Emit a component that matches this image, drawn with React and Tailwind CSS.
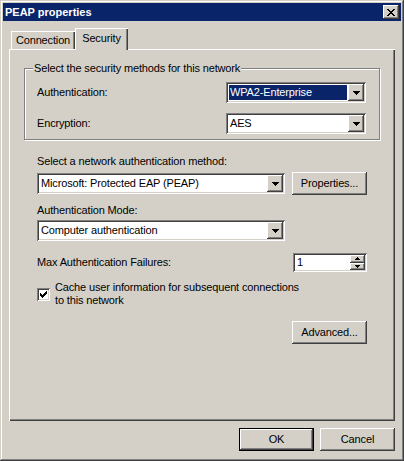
const raised =
  "shadow-[inset_-1px_-1px_#404040,inset_1px_1px_#ffffff,inset_-2px_-2px_#808080,inset_2px_2px_#d4d0c8]";
const sunken =
  "shadow-[inset_1px_1px_#808080,inset_-1px_-1px_#ffffff,inset_2px_2px_#404040,inset_-2px_-2px_#d4d0c8]";

// tiny bitmap glyph, one string per row, "#" = black pixel
const Pixels = ({ rows }) => (
  <svg
    width={rows[0].length}
    height={rows.length}
    shapeRendering="crispEdges"
    className="block"
  >
    {rows.map((row, y) =>
      row.split("").map((c, x) =>
        c === "#" ? <rect key={`${x}-${y}`} x={x} y={y} width="1" height="1" fill="#000" /> : null
      )
    )}
  </svg>
);

const arrowDown = ["#######", ".#####.", "..###..", "...#..."];
const tinyUp = ["..#..", ".###.", "#####"];
const tinyDown = ["#####", ".###.", "..#.."];
const closeX = ["##....##", ".##..##.", "..####..", "...##...", "..####..", ".##..##.", "##....##"];
const check = ["......#", ".....##", "#...###", "##.###.", "#####..", ".###...", "..#...."];

const Combo = ({ value, selected, className }) => (
  <div className={`flex h-[21px] items-stretch bg-white p-[2px] ${sunken} ${className}`}>
    <div className="flex flex-1 items-center pl-[1px] pr-[1px] py-[1px]">
      <span
        className={`flex h-full w-full items-center pl-[1px] ${
          selected ? "bg-[#0a246a] text-white" : "text-black"
        }`}
      >
        {value}
      </span>
    </div>
    <div className={`flex w-[16px] items-center justify-center bg-[#d4d0c8] ${raised}`}>
      <Pixels rows={arrowDown} />
    </div>
  </div>
);

const Button = ({ children, isDefault }) => (
  <button
    className={`flex h-[23px] w-[75px] items-center justify-center bg-[#d4d0c8] ${
      isDefault
        ? "shadow-[inset_0_0_0_1px_#000000,inset_-2px_-2px_#404040,inset_2px_2px_#ffffff,inset_-3px_-3px_#808080]"
        : raised
    }`}
  >
    {children}
  </button>
);

export default function App() {
  return (
    <div className="flex h-[461px] w-[404px] flex-col bg-[#d4d0c8] p-[3px] font-['Liberation_Sans',Arial,sans-serif] text-[11px] leading-[13px] tracking-[-0.15px] text-black shadow-[inset_-1px_-1px_#404040,inset_1px_1px_#d4d0c8,inset_-2px_-2px_#808080,inset_2px_2px_#ffffff]">
      {/* Title bar */}
      <div className="flex h-[18px] items-center justify-between bg-[#0a246a] pl-[2px] pr-[2px]">
        <span className="text-[11px] font-bold tracking-normal text-white">PEAP properties</span>
        <div className={`flex h-[14px] w-[16px] items-center justify-center bg-[#d4d0c8] ${raised}`}>
          <Pixels rows={closeX} />
        </div>
      </div>

      <div className="flex flex-1 flex-col px-[6px]">
        {/* Tabs */}
        <div className="mt-[7px] flex h-[21px] items-end pl-[2px]">
          <div className="flex h-[18px] w-[64px] items-center justify-center bg-[#d4d0c8] pt-[1px] shadow-[inset_1px_1px_#ffffff,inset_-1px_0_#404040,inset_-2px_0_#808080]">
            Connection
          </div>
          <div className="relative z-10 -mb-[1px] flex h-[22px] w-[53px] items-start justify-center bg-[#d4d0c8] pt-[4px] shadow-[inset_1px_1px_#ffffff,inset_-1px_0_#404040,inset_-2px_0_#808080]">
            Security
          </div>
        </div>

        {/* Tab panel */}
        <div className="flex h-[372px] flex-col shadow-[inset_1px_1px_#ffffff,inset_-1px_-1px_#404040,inset_-2px_-2px_#808080]">
          {/* Group box */}
          <div className="relative mx-[15px] mt-[19px] flex flex-col gap-[10px] border border-[#808080] pb-[5px] pl-[12px] pr-[13px] pt-[13px] shadow-[1px_1px_#ffffff,inset_1px_1px_#ffffff]">
            <span className="absolute -top-[7px] left-[8px] bg-[#d4d0c8] px-[1px]">
              Select the security methods for this network
            </span>
            <div className="flex items-center justify-between">
              <span>Authentication:</span>
              <Combo value="WPA2-Enterprise" selected className="w-[140px]" />
            </div>
            <div className="flex items-center justify-between">
              <span>Encryption:</span>
              <Combo value="AES" className="w-[140px]" />
            </div>
          </div>

          {/* Lower section */}
          <div className="flex w-[358px] flex-col pl-[28px]">
            <div className="mt-[15px]">Select a network authentication method:</div>
            <div className="mt-[4px] flex h-[23px] items-center gap-[7px]">
              <Combo value="Microsoft: Protected EAP (PEAP)" className="w-[248px]" />
              <Button>Properties...</Button>
            </div>
            <div className="mt-[9px]">Authentication Mode:</div>
            <Combo value="Computer authentication" className="mt-[3px] w-[248px]" />

            <div className="mt-[12px] flex h-[19px] items-center justify-between">
              <span>Max Authentication Failures:</span>
              <div className={`flex h-[19px] w-[74px] items-stretch bg-white p-[2px] ${sunken}`}>
                <span className="flex flex-1 items-center pl-[2px]">1</span>
                <div className="flex w-[15px] flex-col">
                  <div className={`flex flex-1 items-center justify-center bg-[#d4d0c8] ${raised}`}>
                    <Pixels rows={tinyUp} />
                  </div>
                  <div className={`flex flex-1 items-center justify-center bg-[#d4d0c8] ${raised}`}>
                    <Pixels rows={tinyDown} />
                  </div>
                </div>
              </div>
            </div>

            <div className="mt-[9px] flex items-center gap-[5px]">
              <div className={`flex h-[13px] w-[13px] shrink-0 items-center justify-center bg-white ${sunken}`}>
                <Pixels rows={check} />
              </div>
              <span>
                Cache user information for subsequent connections
                <br />
                to this network
              </span>
            </div>

            <div className="mt-[14px] flex justify-end">
              <Button>Advanced...</Button>
            </div>
          </div>
        </div>

        {/* Dialog buttons */}
        <div className="mt-[7px] flex justify-end gap-[6px]">
          <Button isDefault>OK</Button>
          <Button>Cancel</Button>
        </div>
      </div>
    </div>
  );
}
